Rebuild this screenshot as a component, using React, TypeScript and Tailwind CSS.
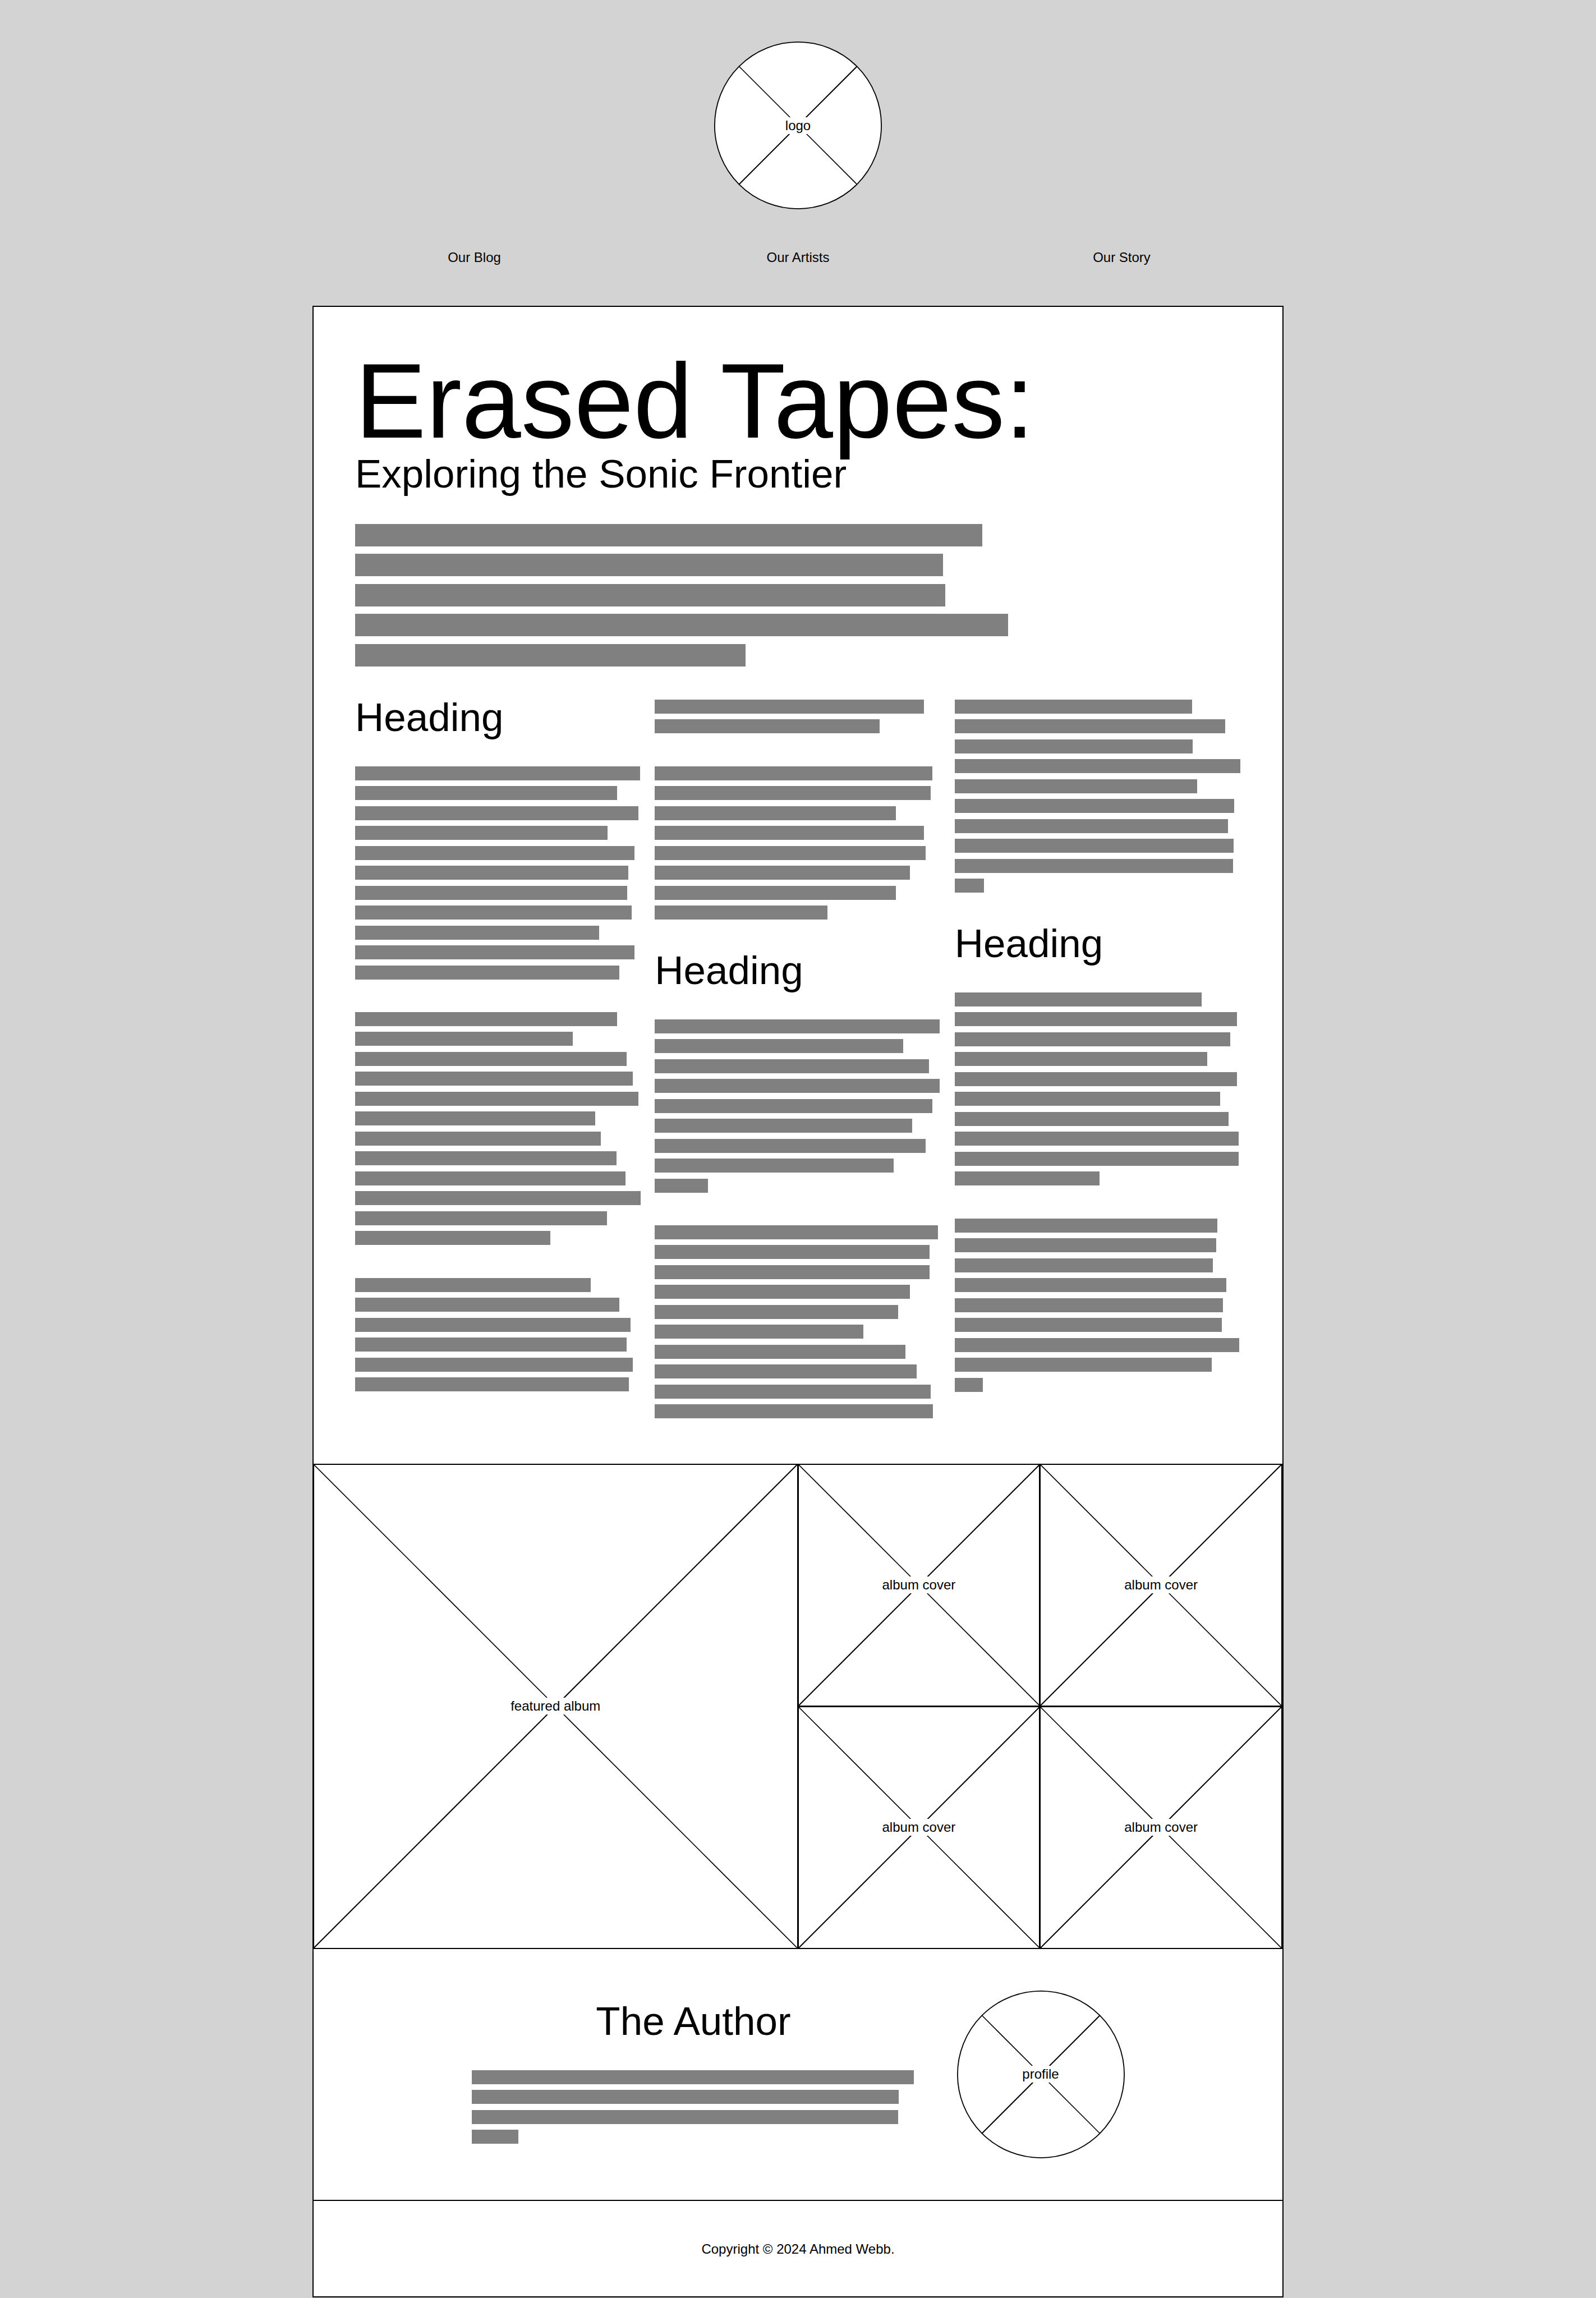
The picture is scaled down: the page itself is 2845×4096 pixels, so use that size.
import React from "react";

/** Widths of redacted text lines, in percent of the column they sit in. */
type Lines = number[];

type Block =
  | { kind: "heading"; text: string }
  | { kind: "paragraph"; lines: Lines };

const INTRO: Lines = [70.8, 66.4, 66.6, 73.7, 44.1];

const COLUMNS: Block[][] = [
  [
    { kind: "heading", text: "Heading" },
    {
      kind: "paragraph",
      lines: [99.5, 91.6, 98.9, 88.2, 97.5, 95.4, 95.1, 96.6, 85.3, 97.5, 92.2],
    },
    {
      kind: "paragraph",
      lines: [91.6, 76, 94.8, 96.9, 98.9, 83.8, 85.8, 91.4, 94.5, 99.7, 87.9, 68.2],
    },
    { kind: "paragraph", lines: [82.3, 92.2, 96.3, 94.8, 96.9, 95.7] },
  ],
  [
    { kind: "paragraph", lines: [94, 78.6] },
    { kind: "paragraph", lines: [96.9, 96.3, 84.1, 94, 94.5, 89, 84.1, 60.3] },
    { kind: "heading", text: "Heading" },
    {
      kind: "paragraph",
      lines: [99.5, 86.7, 95.7, 99.5, 96.9, 89.9, 94.5, 83.5, 18.5],
    },
    {
      kind: "paragraph",
      lines: [98.9, 96, 96, 89, 85, 72.8, 87.6, 91.4, 96.3, 97.2],
    },
  ],
  [
    {
      kind: "paragraph",
      lines: [83, 94.6, 83.2, 99.8, 84.7, 97.7, 95.4, 97.4, 97.2, 10.2],
    },
    { kind: "heading", text: "Heading" },
    {
      kind: "paragraph",
      lines: [86.2, 98.6, 96.3, 88.2, 98.6, 92.8, 95.7, 99.2, 99.2, 50.7],
    },
    {
      kind: "paragraph",
      lines: [91.7, 91.4, 90.2, 94.9, 93.7, 93.4, 99.4, 89.9, 9.9],
    },
  ],
];

const AUTHOR: Lines = [99.7, 96.3, 96.1, 10.6];

const NAV = ["Our Blog", "Our Artists", "Our Story"];

function Paragraph({ lines }: { lines: Lines }) {
  return (
    <div aria-hidden="true">
      {lines.map((width, i) => (
        <div key={i} className="pt-1 odd:h-[35px] even:h-[36px]">
          <div className="h-[25px] bg-[#808080]" style={{ width: `${width}%` }} />
        </div>
      ))}
    </div>
  );
}

function LeadParagraph({ lines }: { lines: Lines }) {
  return (
    <div aria-hidden="true">
      {lines.map((width, i) => (
        <div key={i} className="pt-1.5 odd:h-[53px] even:h-[54px]">
          <div className="h-10 bg-[#808080]" style={{ width: `${width}%` }} />
        </div>
      ))}
    </div>
  );
}

function Label({ children }: { children: React.ReactNode }) {
  return <span className="relative bg-white leading-[30px]">{children}</span>;
}

function RoundPlaceholder({ label }: { label: string }) {
  return (
    <div className="relative grid size-[299px] shrink-0 place-items-center">
      <svg
        viewBox="0 0 299 299"
        className="absolute inset-0 size-full"
        fill="none"
        stroke="black"
        aria-hidden="true"
      >
        <circle cx="149.5" cy="149.5" r="148.6" fill="white" strokeWidth="1.8" />
        <path d="M44.3 44.3 254.7 254.7" strokeWidth="1.6" />
        <path d="M254.7 44.3 44.3 254.7" strokeWidth="2" />
      </svg>
      <Label>{label}</Label>
    </div>
  );
}

function SquarePlaceholder({ label }: { label: string }) {
  return (
    <div className="relative grid aspect-square place-items-center border-t-2 border-r-2 border-b border-l border-black">
      <svg
        viewBox="0 0 100 100"
        preserveAspectRatio="none"
        className="absolute inset-0 size-full"
        stroke="black"
        aria-hidden="true"
      >
        <path d="M0 0 100 100" strokeWidth="1.6" vectorEffect="non-scaling-stroke" />
        <path d="M100 0 0 100" strokeWidth="2" vectorEffect="non-scaling-stroke" />
      </svg>
      <Label>{label}</Label>
    </div>
  );
}

export default function App() {
  return (
    <div className="min-h-screen bg-[#d3d3d3] font-['Liberation_Sans',Arial,sans-serif] text-[24px] leading-6 text-black">
      <div className="mx-auto max-w-[1731px]">
        <header className="flex flex-col items-center gap-[74px] py-[74px]">
          <RoundPlaceholder label="logo" />
          <nav className="grid w-full grid-cols-3 text-center">
            {NAV.map((item) => (
              <div key={item}>
                <a href="#">{item}</a>
              </div>
            ))}
          </nav>
        </header>

        <main className="border-2 border-black bg-white">
          <article className="flex flex-col gap-12 px-[74px] pt-[72px] pb-[74px]">
            <div>
              <h1 className="text-[190px] leading-[190px]">Erased Tapes:</h1>
              <h2 className="text-[71px] leading-[71px]">Exploring the Sonic Frontier</h2>
            </div>
            <LeadParagraph lines={INTRO} />
            <div className="grid grid-cols-3 gap-6">
              {COLUMNS.map((blocks, c) => (
                <div key={c} className="flex flex-col gap-12">
                  {blocks.map((block, b) =>
                    block.kind === "heading" ? (
                      <h3 key={b} className="text-[71px] leading-[71px]">
                        {block.text}
                      </h3>
                    ) : (
                      <Paragraph key={b} lines={block.lines} />
                    ),
                  )}
                </div>
              ))}
            </div>
          </article>

          <section className="grid grid-cols-2 border-b border-black">
            <SquarePlaceholder label="featured album" />
            <div className="grid grid-cols-2">
              {[1, 2, 3, 4].map((n) => (
                <SquarePlaceholder key={n} label="album cover" />
              ))}
            </div>
          </section>

          <section className="flex items-center justify-center gap-[74px] py-[74px]">
            <div className="flex w-full max-w-[791px] flex-col gap-12">
              <h2 className="text-center text-[71px] leading-[71px]">The Author</h2>
              <Paragraph lines={AUTHOR} />
            </div>
            <RoundPlaceholder label="profile" />
          </section>

          <footer className="border-t-2 border-black pt-[74px] pb-[72px] text-center">
            Copyright © 2024 Ahmed Webb.
          </footer>
        </main>
      </div>
    </div>
  );
}
